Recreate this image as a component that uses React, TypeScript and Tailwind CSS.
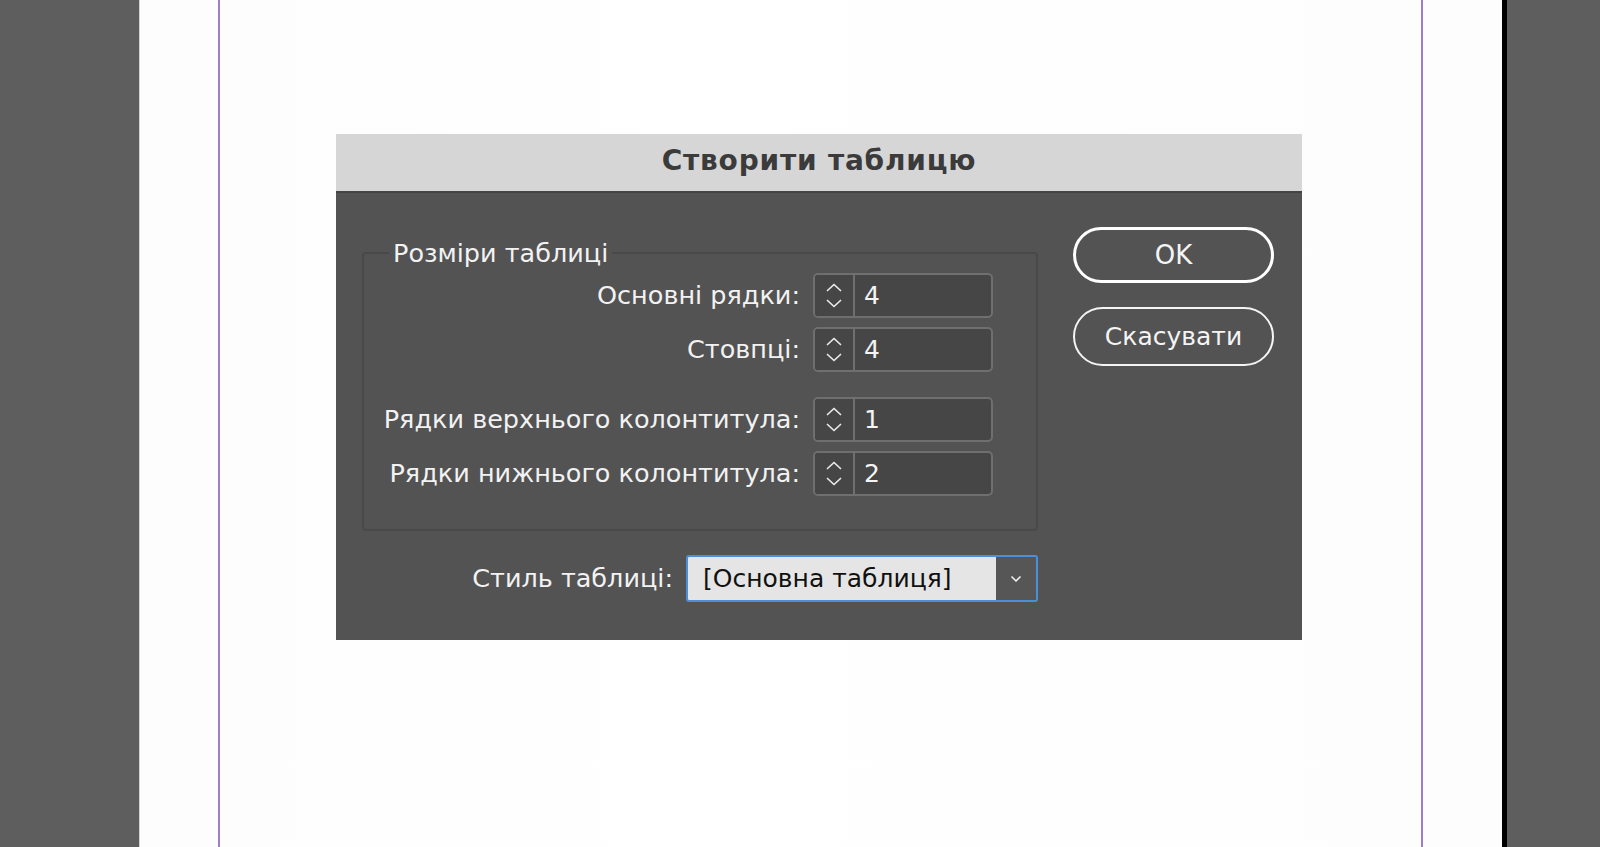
import { ChevronDown } from "lucide-react";

type RowProps = {
  label: string;
  value: string;
};

const font = { fontFamily: '"DejaVu Sans", "Open Sans", sans-serif' };

const Chevron = ({ up }: { up?: boolean }) => (
  <svg width="16" height="9" viewBox="0 0 16 9" fill="none" stroke="currentColor" strokeWidth="1.7" strokeLinecap="round" strokeLinejoin="round">
    {up ? <polyline points="1.5,7.5 8,1.5 14.5,7.5" /> : <polyline points="1.5,1.5 8,7.5 14.5,1.5" />}
  </svg>
);

const Stepper = ({ value }: { value: string }) => (
  <div className="flex h-[45px] w-[180px] overflow-hidden rounded-[5px] border-2 border-[#6f6f6f] bg-[#464646]">
    <div className="flex w-[40px] flex-col items-center justify-center gap-[7px] border-r-2 border-[#6f6f6f] bg-[#464646] text-[#e8e8e8]">
      <Chevron up />
      <Chevron />
    </div>
    <div className="flex flex-1 items-center pl-[9px] text-[25px] leading-none text-[#f4f4f4]">{value}</div>
  </div>
);

const Row = ({ label, value }: RowProps) => (
  <div className="flex h-[45px] items-center justify-end gap-[13px]">
    <span className="text-[25.5px] leading-none text-[#f2f2f2]">{label}</span>
    <Stepper value={value} />
  </div>
);

export default function App() {
  return (
    <div className="relative flex h-[847px] w-[1600px] overflow-hidden" style={font}>
      {/* pasteboard + page */}
      <div className="w-[140px] border-r border-[#d2d2d2] bg-[#5e5e5e]" />
      <div className="flex-1 bg-[#fdfdfd] pl-[78px] pr-[79px]">
        <div className="h-full border-x-2 border-[#9a80c6] bg-[linear-gradient(90deg,#fdfdfd,#ffffff_40%,#fdfdfd)]" />
      </div>
      <div className="w-[5px] bg-black" />
      <div className="w-[93px] bg-[#5e5e5e]" />

      {/* dialog */}
      <div className="absolute left-[336px] top-[134px] flex h-[506px] w-[966px] flex-col bg-[#535353]">
        <div className="flex h-[59px] items-center justify-center border-b-2 border-[#444444] bg-[#d6d6d6] pb-[4px]">
          <h1 className="text-[28px] font-bold tracking-[0.8px] text-[#3b3b3b]">Створити таблицю</h1>
        </div>

        <div className="flex gap-[35px] pl-[26px] pr-[28px] pt-[34px]">
          <div className="mt-[10px] w-[676px]">
            <fieldset className="rounded-[4px] border-2 border-[#494949] pb-[33px] pr-[43px] pt-[4px]">
              <legend className="ml-[25px] px-[4px] text-[25.5px] leading-[32px] text-[#f2f2f2]">Розміри таблиці</legend>
              <div className="flex flex-col gap-[9px]">
                <Row label="Основні рядки:" value="4" />
                <Row label="Стовпці:" value="4" />
                <div className="h-[7px]" />
                <Row label="Рядки верхнього колонтитула:" value="1" />
                <Row label="Рядки нижнього колонтитула:" value="2" />
              </div>
            </fieldset>

            <div className="mt-[24px] flex items-center justify-end gap-[13px]">
              <span className="text-[25.5px] leading-none text-[#f2f2f2]">Стиль таблиці:</span>
              <div className="flex h-[47px] w-[352px] overflow-hidden rounded-[3px] border-2 border-[#4b8fda]">
                <div className="flex flex-1 items-center bg-[#e5e5e5] pl-[15px] text-[25px] leading-none text-[#111111]">
                  [Основна таблиця]
                </div>
                <div className="flex w-[40px] items-center justify-center bg-[#565656] text-[#eeeeee]">
                  <ChevronDown className="h-[16px] w-[16px]" strokeWidth={2.5} />
                </div>
              </div>
            </div>
          </div>

          <div className="flex w-[201px] flex-col gap-[24px]">
            <button
              type="button"
              className="h-[56px] w-[201px] rounded-full border-[3px] border-white text-[26px] text-[#f4f4f4]"
            >
              OK
            </button>
            <button
              type="button"
              className="h-[59px] w-[201px] rounded-full border-2 border-[#f4f4f4] text-[25px] text-[#f4f4f4]"
            >
              Скасувати
            </button>
          </div>
        </div>
      </div>
    </div>
  );
}
